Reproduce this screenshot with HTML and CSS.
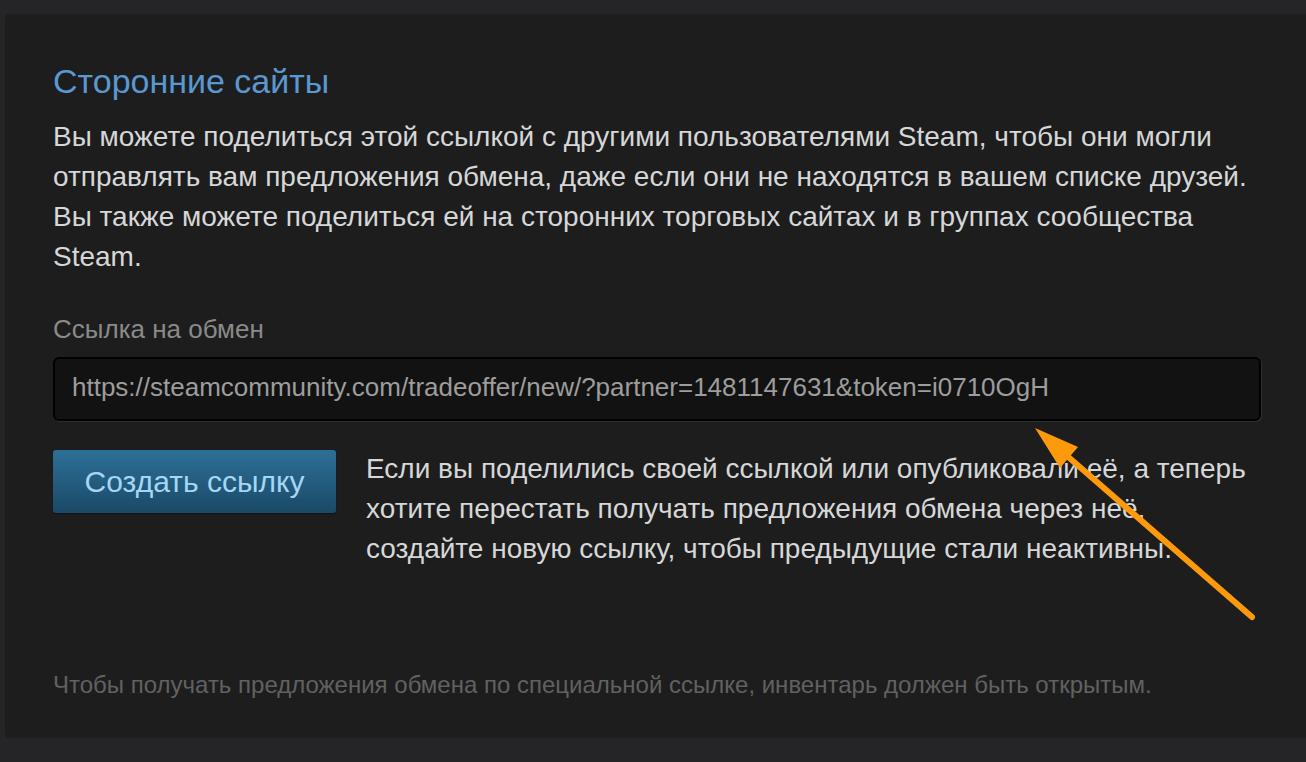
FILE: index.html
```html
<html>
<head>
<meta charset="utf-8">
<link rel="stylesheet" href="styles.css">
</head>
<body>
<div class="panel">
	<h2 class="panel-title">Сторонние сайты</h2>
	<p class="panel-text">Вы можете поделиться этой ссылкой с другими пользователями Steam, чтобы они могли отправлять вам предложения обмена, даже если они не находятся в вашем списке друзей. Вы также можете поделиться ей на сторонних торговых сайтах и в группах сообщества Steam.</p>

	<label class="url-label" for="trade_url">Ссылка на обмен</label>
	<input id="trade_url" class="url-box" type="text" readonly value="https://steamcommunity.com/tradeoffer/new/?partner=1481147631&amp;token=i0710OgH">

	<div class="url-actions">
		<button class="btn-blue" type="button">Создать ссылку</button>
		<p class="url-actions-note">Если вы поделились своей ссылкой или опубликовали её, а теперь хотите перестать получать предложения обмена через неё, создайте новую ссылку, чтобы предыдущие стали неактивны.</p>
	</div>

	<p class="panel-footnote">Чтобы получать предложения обмена по специальной ссылке, инвентарь должен быть открытым.</p>
</div>

<!-- orange pointer drawn over the page -->
<svg class="pointer-arrow" width="1306" height="762" viewBox="0 0 1306 762">
	<line x1="1252" y1="617" x2="1066" y2="455" stroke="#fd9a0c" stroke-width="6" stroke-linecap="round"/>
	<polygon points="1035,428 1078,447 1060,468" fill="#fd9a0c"/>
</svg>
</body>
</html>
```

FILE: styles.css
```css
  html, body {
    margin: 0;
    padding: 0;
}
  body {
    background-color: #252527;
    font-family: "Liberation Sans", Arial, sans-serif;
    overflow: hidden;
    height: 762px;
    position: relative;
}
  h2, p, label {
    margin: 0;
    padding: 0;
    font-weight: normal;
}

  .panel {
    width: 1208px;
    margin: 14px 0 0 5px;
    padding: 47px 48px 37px 48px;
    background-color: #1d1d1d;
    border-radius: 4px;
}
  .panel-title {
    font-size: 34px;
    line-height: 40px;
    color: #5a98d2;
}
  .panel-text {
    margin-top: 16px;
    font-size: 28px;
    line-height: 40px;
    color: #d6d7d8;
}

  .url-label {
    display: block;
    margin-top: 36px;
    font-size: 26px;
    line-height: 32px;
    color: #8a8a8a;
}
  .url-box {
    display: block;
    box-sizing: border-box;
    width: 100%;
    height: 64px;
    margin: 12px 0 0 0;
    padding: 0 17px 4px 17px;
    border: 2px solid #000000;
    border-radius: 6px;
    box-shadow: 1px 1px 0 0 #2c2d35;
    background-color: #121212;
    color: #9d9d9d;
    font-family: inherit;
    font-size: 26px;
    outline: none;
}

  .url-actions {
    display: flex;
    align-items: flex-start;
    gap: 30px;
    margin-top: 28px;
}
  .btn-blue {
    flex: none;
    width: 283px;
    height: 63px;
    margin-top: 1px;
    padding: 0;
    border: 0;
    border-radius: 3px;
    background: linear-gradient(to bottom, #2c6e95 5%, #1b4b69 95%);
    box-shadow: 0 1px 1px rgba(0, 0, 0, 0.4);
    color: #a4d7f5;
    font-family: inherit;
    font-size: 30px;
    cursor: pointer;
}
  .url-actions-note {
    font-size: 28px;
    line-height: 40px;
    color: #d6d7d8;
}

  .panel-footnote {
    margin-top: 100px;
    font-size: 24px;
    line-height: 32px;
    color: #616161;
}

  .pointer-arrow {
    position: absolute;
    left: 0;
    top: 0;
    pointer-events: none;
}
```
